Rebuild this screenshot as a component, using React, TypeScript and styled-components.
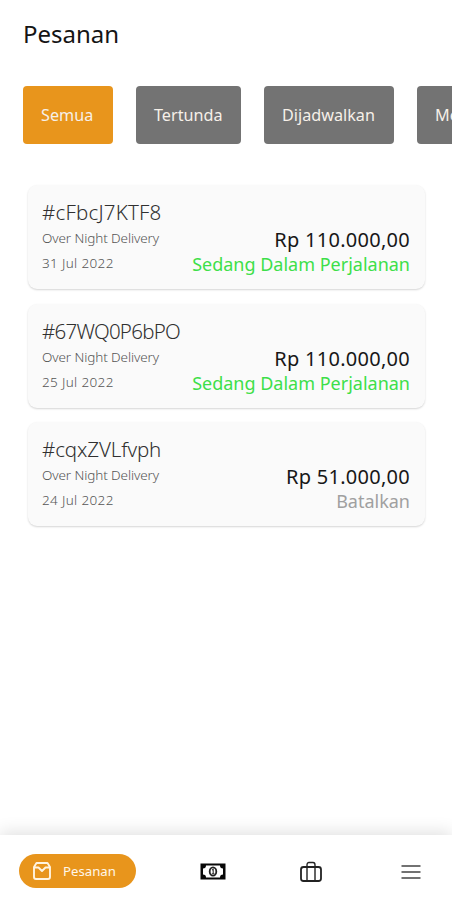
import React from 'react';
import styled, { createGlobalStyle } from 'styled-components';

const GlobalStyle = createGlobalStyle`
  * { box-sizing: border-box; }
  body { margin: 0; background: #fff; font-family: "Noto Sans", "Open Sans", sans-serif; }
  button { font-family: inherit; border: 0; padding: 0; background: none; }
`;

const Screen = styled.div`
  width: 452px;
  height: 900px;
  display: flex;
  flex-direction: column;
  overflow: hidden;
  background: #fff;
`;

const Title = styled.h1`
  margin: 18px 0 0 23px;
  height: 32px;
  font-size: 24px;
  line-height: 32px;
  font-weight: 400;
  color: #151515;
`;

const Filters = styled.div`
  display: flex;
  flex: none;
  gap: 23px;
  margin-top: 36px;
  padding-left: 23px;
  height: 58px;
  overflow: hidden;
`;

const Filter = styled.button<{ $width: number; $active?: boolean }>`
  flex: none;
  width: ${p => p.$width}px;
  height: 58px;
  padding-left: 18px;
  border-radius: 4px;
  background: ${p => (p.$active ? '#e8951c' : '#737373')};
  color: #f6f0e9;
  font-size: 16.2px;
  line-height: 58px;
  text-align: left;
  white-space: nowrap;
`;

const Orders = styled.main`
  flex: 1;
  display: flex;
  flex-direction: column;
  gap: 14.5px;
  padding: 41px 27px 0 28px;
`;

const Card = styled.article`
  display: flex;
  justify-content: space-between;
  height: 104px;
  padding: 14px 15px 0 14px;
  border-radius: 9px;
  background: #fafafa;
  box-shadow: 0 1px 2px rgba(0, 0, 0, 0.17);
  white-space: nowrap;
`;

const Details = styled.div`
  display: flex;
  flex-direction: column;
`;

const OrderId = styled.div<{ $spacing: number }>`
  font-size: 20.5px;
  font-weight: 300;
  line-height: 27px;
  color: #303030;
  letter-spacing: ${p => p.$spacing}px;
`;

const Meta = styled.div<{ $spacing: number }>`
  font-size: 13.5px;
  font-weight: 300;
  line-height: 25px;
  color: #555;
  letter-spacing: ${p => p.$spacing}px;
`;

const Summary = styled.div`
  display: flex;
  flex-direction: column;
  align-items: flex-end;
  padding-top: 28px;
`;

const Price = styled.div`
  font-size: 20px;
  line-height: 25px;
  letter-spacing: 0.27px;
  color: #171717;
`;

const Status = styled.div<{ $color: string }>`
  font-size: 18px;
  line-height: 24px;
  color: ${p => p.$color};
`;

const Navigation = styled.nav`
  flex: none;
  height: 65px;
  display: flex;
  align-items: center;
  padding: 7px 30px 0 19px;
  background: #fff;
  box-shadow: 0 -3px 16px rgba(0, 0, 0, 0.12);
`;

const ActiveTab = styled.button`
  display: flex;
  align-items: center;
  gap: 11px;
  width: 117px;
  height: 34px;
  padding-left: 13px;
  border-radius: 18px;
  background: #e8951c;
  color: #fff7e9;
  font-size: 13.2px;
  line-height: 34px;
`;

const Tab = styled.button<{ $gap: number; $drop?: number }>`
  display: flex;
  margin-left: ${p => p.$gap}px;
  padding-top: ${p => p.$drop ?? 0}px;
`;

const orders = [
  { id: '#cFbcJ7KTF8', spacing: 0.2, date: '31 Jul 2022', price: 'Rp 110.000,00', status: 'Sedang Dalam Perjalanan', color: '#3ddf49' },
  { id: '#67WQ0P6bPO', spacing: -0.75, date: '25 Jul 2022', price: 'Rp 110.000,00', status: 'Sedang Dalam Perjalanan', color: '#3ddf49' },
  { id: '#cqxZVLfvph', spacing: -0.1, date: '24 Jul 2022', price: 'Rp 51.000,00', status: 'Batalkan', color: '#a0a0a0' },
];

const InboxIcon = () => (
  <svg width="20" height="20" viewBox="0 0 20 20" fill="none" stroke="#fff4df" strokeWidth="1.9" strokeLinejoin="round">
    <path d="M4.500 2h11L18 6v10a2 2 0 0 1-2 2H4a2 2 0 0 1-2-2V6zM2 6.500h4.500L10 10l3.500-3.500H18" />
  </svg>
);

const MoneyIcon = () => (
  <svg width="26" height="17" viewBox="0 0 26 17">
    <rect x=".5" y=".5" width="25" height="16" fill="#080808" />
    <path d="M6 2.500h14c0 2 1 3 3 3v6c-2 0-3 1-3 3H6c0-2-1-3-3-3v-6c2 0 3-1 3-3z" fill="#fff" />
    <ellipse cx="13" cy="8.500" rx="3.300" ry="4.200" fill="#fff" stroke="#222" strokeWidth="1.800" />
    <path d="M12 7l1.200-.8v4.600M11.800 10.800h2.700" fill="none" stroke="#333" strokeWidth="1.100" />
  </svg>
);

const LuggageIcon = () => (
  <svg width="24" height="22" viewBox="0 0 24 22" fill="none" stroke="#222">
    <rect x="2" y="6" width="20" height="14" rx="2.500" strokeWidth="1.800" />
    <path d="M8 6v14M16 6v14M8 6V4c0-1.500.8-2.500 2-2.500h4c1.200 0 2 1 2 2.500v2" strokeWidth="1.400" />
  </svg>
);

const MenuIcon = () => (
  <svg width="20" height="16" viewBox="0 0 20 16" stroke="#444" strokeWidth="1.700">
    <path d="M.5 2h19M.5 8h19M.5 14h19" />
  </svg>
);

export default function App() {
  return (
    <>
      <GlobalStyle />
      <Screen>
        <Title>Pesanan</Title>
        <Filters>
          <Filter $active $width={90}>Semua</Filter>
          <Filter $width={105}>Tertunda</Filter>
          <Filter $width={130}>Dijadwalkan</Filter>
          <Filter $width={116}>Me</Filter>
        </Filters>
        <Orders>
          {orders.map(order => (
            <Card key={order.id}>
              <Details>
                <OrderId $spacing={order.spacing}>{order.id}</OrderId>
                <Meta $spacing={-0.1}>Over Night Delivery</Meta>
                <Meta $spacing={0.35}>{order.date}</Meta>
              </Details>
              <Summary>
                <Price>{order.price}</Price>
                <Status $color={order.color}>{order.status}</Status>
              </Summary>
            </Card>
          ))}
        </Orders>
        <Navigation>
          <ActiveTab><InboxIcon />Pesanan</ActiveTab>
          <Tab $gap={64} aria-label="Pembayaran"><MoneyIcon /></Tab>
          <Tab $gap={73} $drop={1} aria-label="Pengiriman"><LuggageIcon /></Tab>
          <Tab $gap={78} $drop={2} aria-label="Menu"><MenuIcon /></Tab>
        </Navigation>
      </Screen>
    </>
  );
}
